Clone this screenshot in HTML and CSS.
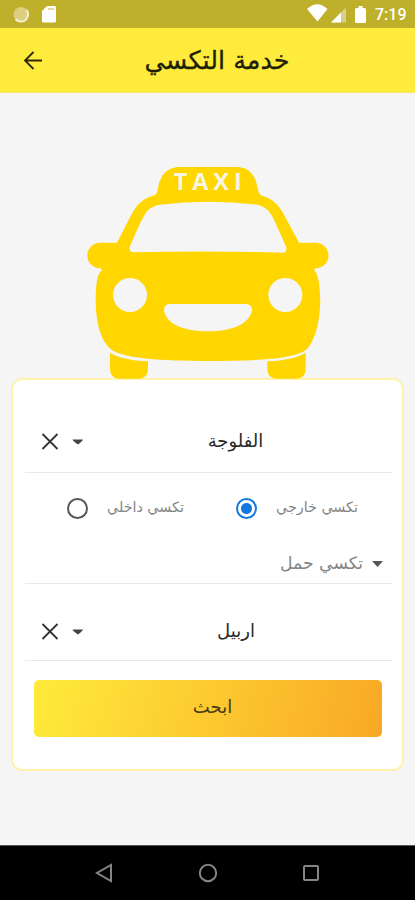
FILE: index.html
```html
<!DOCTYPE html>
<html lang="ar">
<head>
<meta charset="utf-8">
<title>خدمة التكسي</title>
<link rel="stylesheet" href="styles.css">
</head>
<body>
<div class="status">
  <svg class="status-left" width="48" height="28" viewBox="0 0 48 28"><circle cx="13" cy="14.500" r="7.500" fill="#dccf80"/><path d="M7.500 19A7 7 0 0 0 18.500 10" fill="none" stroke="#f3eed0" stroke-width="2"/><path d="M39 6h7.500a1.500 1.500 0 0 1 1.500 1.500v13.500a1.500 1.500 0 0 1-1.500 1.500h-11a1.500 1.500 0 0 1-1.500-1.500V11z" fill="#fff"/><path d="M40 9h6" stroke="#d8cd83" stroke-width="1.500"/></svg>
  <svg class="status-right" width="62" height="28" viewBox="0 0 62 28"><path d="M0 9Q10-.5 20.500 9L10.500 21.500z" fill="#fff"/><path d="M39 7.500V22.500H24z" fill="#d8cf8d"/><path d="M34 12.500V22.500H24z" fill="#fff"/><path d="M51.500 6h4v2h2q1.500 0 1.500 1.500v12q0 1.500-1.500 1.500h-8q-1.500 0-1.500-1.500v-12Q48 8 49.500 8h2z" fill="#fff"/></svg>
  <span class="clock">7:19</span>
</div>
<header class="bar">
  <svg class="back" width="20" height="20" viewBox="0 0 20 20"><path d="M19 10.500H2M10.500 2L2 10.500L10.500 19" fill="none" stroke="#2d290d" stroke-width="1.800"/></svg>
  <h1 class="title" dir="rtl">خدمة التكسي</h1>
</header>
<main>
  <div class="hero">
    <svg width="260" height="219" viewBox="0 0 780 657">
      <g fill="#ffd600">
        <path fill-rule="evenodd" d="M290 21H475Q515 24 529 67Q534 98 542 106C575 114 596 134 612 164L657 248H707A38 38 0 0 1 707 325L702 330C717 344 719 380 721 425C719 478 709 536 681 567C651 598 520 603 384 603C248 603 123 595 92 567C57 537 47 476 47 415C48 370 51 340 67 330L61 325A38 38 0 0 1 60 248H111L154 164C172 132 190 114 224 106C236 98 233 80 238 66Q250 28 290 21ZM240 134C214 138 203 148 190 171C175 199 160 235 149 261Q146 275 160 277Q384 272 608 278Q622 277 619 262L580 175C568 151 556 139 531 134Q384 117 240 134ZM150 354A51 51 0 1 0 150 456A51 51 0 1 0 150 354ZM616 354A51 51 0 1 0 616 456A51 51 0 1 0 616 354ZM266 432Q251 435 252 453C261 497 321 514 384 514C447 514 505 497 516 453Q517 435 500 432Z"/>
        <path d="M90 578Q125 600 204 604V630Q202 656 177 656H118Q90 654 90 626ZM562 604Q642 600 677 578V626Q677 654 649 656H590Q564 655 562 630Z"/>
      </g>
      <text class="sign" x="281" y="89" textLength="204">TAXI</text>
    </svg>
  </div>
  <section class="card">
    <div class="field city">
      <svg class="tools" width="44" height="20" viewBox="0 0 44 20"><path d="M1.500 3L16.500 18M16.500 3L1.500 18" stroke="#333" stroke-width="1.800"/><path d="M31.500 8.500h10.500q-.5 1.500-5 5q-5-3.500-5.500-5z" fill="#444"/></svg>
      <span class="value falluja" dir="rtl">الفلوجة</span>
    </div>
    <div class="options">
      <div class="option"><i class="radio"></i><span class="label inside" dir="rtl">تكسي داخلي</span></div>
      <div class="option"><i class="radio on"></i><span class="label outside" dir="rtl">تكسي خارجي</span></div>
    </div>
    <div class="field cargo">
      <span class="label load" dir="rtl">تكسي حمل</span>
      <svg class="caret" width="11" height="6" viewBox="0 0 11 6"><path d="M0 0h11L5.500 6z" fill="#555"/></svg>
    </div>
    <div class="field city second">
      <svg class="tools" width="44" height="20" viewBox="0 0 44 20"><path d="M1.500 3L16.500 18M16.500 3L1.500 18" stroke="#333" stroke-width="1.800"/><path d="M31.500 8.500h10.500q-.5 1.500-5 5q-5-3.500-5.500-5z" fill="#444"/></svg>
      <span class="value erbil" dir="rtl">اربيل</span>
    </div>
    <button class="search" dir="rtl">ابحث</button>
  </section>
</main>
<nav>
  <svg width="18" height="20" viewBox="0 0 18 20"><path d="M16 2V18L2 10z"/></svg>
  <svg width="20" height="20" viewBox="0 0 20 20"><circle cx="10" cy="10" r="8.200"/></svg>
  <svg width="18" height="18" viewBox="0 0 18 18"><rect x="2" y="2" width="14" height="14" rx="1"/></svg>
</nav>
</body>
</html>
```
FILE: styles.css
```css
* { box-sizing: border-box; }
body { margin: 0; width: 415px; height: 900px; display: flex; flex-direction: column; overflow: hidden; background: #f5f5f5; font-family: "DejaVu Sans", sans-serif; }
svg { display: block; flex: none; }
.status { height: 28px; flex: none; background: #bfb02c; display: flex; align-items: center; padding: 0 9px 0 8px; }
.status-right { margin-left: auto; margin-right: 6px; }
.clock { font: 500 16px/28px Roboto, sans-serif; color: #fff; width: 31px; padding-top: 2px; white-space: nowrap; }
.bar { height: 65px; flex: none; background: #ffeb3b; border-bottom: 1px solid #f5e66b; display: grid; grid-template-columns: 20px 1fr; align-items: center; padding: 0 24px 0 23px; }
.title { margin: 0; font-size: 25.5px; font-weight: 400; line-height: 40px; text-align: center; color: #211e08; white-space: nowrap; -webkit-text-stroke: .3px #211e08; }
main { flex: 1; }
.hero { height: 285px; padding: 67px 0 0 80px; }
.sign { font: 700 70px "Open Sans", sans-serif; fill: #f8f5e4; }
.card { margin: 0 11px; height: 393px; background: #fff; border: 2px solid #fff2aa; border-radius: 11px; padding: 0 10px 0 12px; }
.field { border-bottom: 1px solid #e8e8e8; }
.city { height: 93px; display: grid; grid-template-columns: 44px 1fr; padding: 51px 0 0 16px; align-items: start; }
.second { height: 77px; padding-top: 37px; }
.value { text-align: center; color: #2a2a2a; line-height: 20px; white-space: nowrap; }
.falluja { font-size: 18px; padding-right: 6px; }
.erbil { font-size: 18px; padding-right: 5px; }
.options { height: 70px; display: grid; grid-template-columns: 169px 1fr; padding: 25px 0 0 42px; }
.option { display: flex; gap: 19px; align-items: flex-start; }
.radio { width: 21px; height: 21px; flex: none; border: 2px solid #555; border-radius: 50%; }
.radio.on { border-color: #1479df; background: radial-gradient(circle, #1479df 0 5px, transparent 6px); }
.label { color: #858585; line-height: 18px; font-size: 14.3px; white-space: nowrap; }
.load { font-size: 17.2px; }
.caret { margin-top: 2px; }
.cargo { height: 41px; display: flex; justify-content: flex-end; align-items: center; gap: 9px; padding: 0 9px 0 0; }
.search { display: flex; align-items: center; justify-content: center; margin: 19px 0 0 9px; width: 348px; height: 57px; border: 0; border-radius: 5px; padding: 0 0 4px 9px; background: linear-gradient(105deg, #ffeb3b, #f9a825); color: #463a10; font: 18px "DejaVu Sans", sans-serif; }
nav { height: 55px; flex: none; background: #000; border-top: 1px solid #555; display: flex; justify-content: space-between; align-items: center; padding: 0 95px; }
nav svg { fill: none; stroke: #858585; stroke-width: 2; }
```
